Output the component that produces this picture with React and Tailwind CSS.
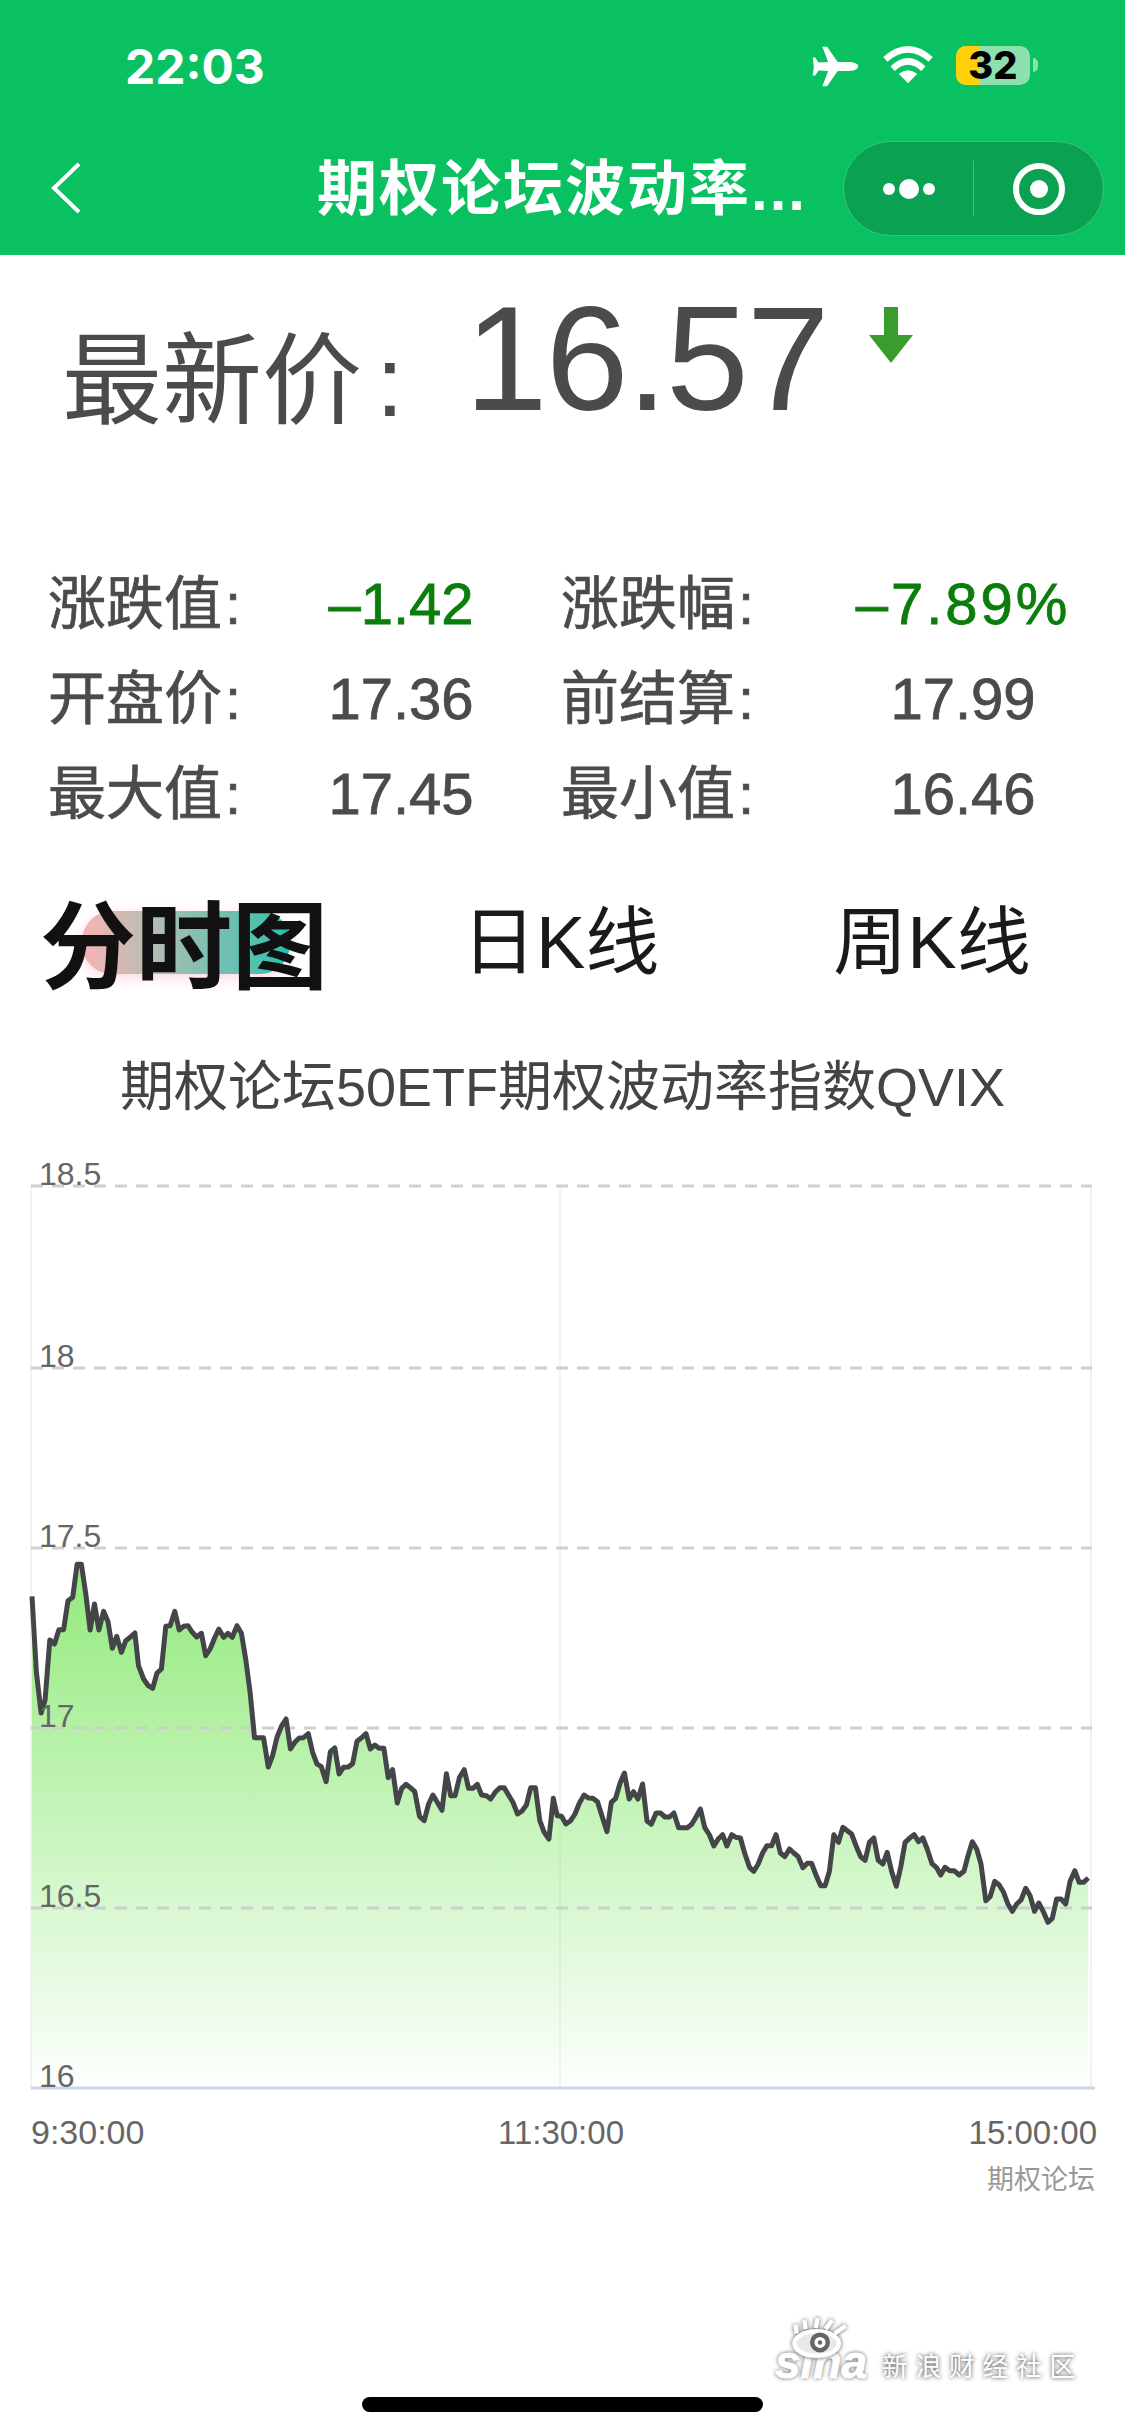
import React from 'react';

const sans = "font-['Liberation_Sans','Noto_Sans_CJK_SC',sans-serif]";

// chart line, read off in two crops: [x, y] in crop pixels
const partA = [88,172,100,400,113,522,124,482,137,303,150,315,162,272,175,272,187,185,200,175,212,76,224,76,236,165,248,273,260,195,272,273,285,217,297,248,309,328,321,292,334,340,346,305,358,295,371,282,381,380,395,420,408,440,420,448,432,402,444,390,456,262,468,260,481,217,493,273,505,262,517,260,529,280,541,294,554,283,566,350,578,330,590,298,602,270,615,295,627,283,639,295,652,260,664,283,676,360,688,460,700,596,712,596,725,596,738,684,750,650,762,595,775,560,787,540,799,630,811,610,823,597,835,596,848,584,860,640,872,675,884,683,897,728,909,638,921,627,933,705,945,685,958,684,970,674,982,607,994,597,1007,584,1019,630,1031,618,1043,628,1056,628,1068,716,1080,692,1093,792,1105,748,1117,736,1129,746,1141,758,1154,832,1167,845,1179,795,1191,768,1203,790,1216,814,1228,704,1240,770,1252,770,1264,715,1277,692,1289,748,1301,748,1313,736,1325,768,1338,770,1350,780,1362,760,1375,746,1387,746,1399,768,1411,790,1424,825,1436,816,1448,798,1460,746,1473,746,1485,845,1497,880,1510,900,1522,778];
const partB = [6,350,18,352,30,375,43,365,55,345,67,312,80,288,92,297,104,298,117,308,129,350,143,398,155,310,167,298,179,252,191,222,204,300,216,278,228,300,241,255,253,366,265,376,278,342,290,342,303,354,315,354,327,342,340,386,352,386,364,386,376,376,388,354,400,330,412,386,425,408,437,441,449,420,461,407,473,441,486,407,498,415,510,417,522,463,535,505,547,517,559,495,571,462,583,440,596,440,608,407,620,462,632,473,645,450,657,462,669,473,682,506,694,493,706,493,718,528,731,560,743,560,755,517,767,407,780,430,792,385,804,395,816,405,828,440,841,473,853,484,865,430,877,417,889,484,902,495,914,460,926,517,939,562,951,505,963,430,975,418,988,407,1000,428,1012,417,1024,450,1037,494,1049,505,1061,528,1073,505,1086,515,1098,515,1112,528,1125,517,1135,475,1148,428,1160,450,1172,495,1185,605,1197,593,1210,547,1222,558,1234,580,1246,615,1258,637,1270,615,1282,603,1295,568,1307,590,1319,637,1331,612,1343,637,1356,670,1368,658,1380,600,1392,600,1405,615,1417,547,1430,515,1442,550,1454,550,1467,537];

const CHART_TOP = 1140;
const points = [];
for (let i = 0; i < partA.length; i += 2) {
  points.push([partA[i] / 2.751, 1540 + partA[i + 1] / 3 - CHART_TOP]);
}
for (let i = 0; i < partB.length; i += 2) {
  points.push([555 + partB[i] / 2.751, 1700 + partB[i + 1] / 3 - CHART_TOP]);
}
const linePath = points.map(([x, y], i) => `${i ? 'L' : 'M'}${x.toFixed(1)} ${y.toFixed(1)}`).join(' ');
const base = 2089 - CHART_TOP;
const areaPath = `${linePath} L${points[points.length - 1][0].toFixed(1)} ${base} L${points[0][0].toFixed(1)} ${base} Z`;
const grid = [
  ['18.5', 1187],
  ['18', 1369],
  ['17.5', 1549],
  ['17', 1729],
  ['16.5', 1909],
];

const StatusBar = () => (
  <div className="h-[128px] flex items-start">
    <span className="ml-[125px] mt-[44px] text-[48px] leading-[46px] font-bold text-white font-['Inter',sans-serif]">22:03</span>
    <svg className="ml-[547px] mt-[46px]" width="47" height="41" viewBox="103 52 137 120">
      <path fill="#fff" d="M238 112C238 104 225 99 210 99L178 99L147 54L133 54L150 99L122 100L112 86L105 86L108 112L105 138L112 138L122 124L150 125L133 170L147 170L178 125L210 125C225 125 238 120 238 112Z" />
    </svg>
    <svg className="ml-[23px] mt-[46px]" width="52" height="38" viewBox="312 50 156 114">
      <path fill="#fff" d="M390 162L362 133Q390 112 418 133Z" />
      <path fill="none" stroke="#fff" strokeWidth="19" d="M344 118Q390 74 436 118" />
      <path fill="none" stroke="#fff" strokeWidth="19" d="M322 90Q390 30 458 90" />
    </svg>
    <div className="relative ml-[22px] mt-[46px] w-[74px] h-[39px] rounded-[10px] bg-[#8de0b0] flex items-center justify-center">
      <div className="absolute left-0 top-0 bottom-0 w-[24px] rounded-l-[10px] bg-[#ffd00a]" />
      <span className="relative text-[38px] leading-[39px] font-extrabold text-black font-['Inter',sans-serif]">32</span>
    </div>
    <div className="ml-[3px] mt-[58px] w-[5px] h-[14px] rounded-r-full bg-[#8de0b0]" />
  </div>
);

const NavBar = () => (
  <div className="h-[127px] flex items-start">
    <svg className="ml-[50px] mt-[34px]" width="32" height="52" viewBox="0 0 32 52">
      <path d="M29 2L4 26L29 50" fill="none" stroke="#fff" strokeWidth="4" />
    </svg>
    <span className={`ml-[235px] mt-[29px] text-[60px] leading-[66px] font-semibold text-white tracking-[2px] whitespace-nowrap ${sans}`}>期权论坛波动率...</span>
    <div className="ml-auto mr-[21px] mt-[13px] w-[261px] h-[95px] rounded-full bg-[#0aa252] border border-[#3cc47f] flex items-center">
      <div className="w-[130px] h-[55px] border-r border-[#3cc47f] flex items-center justify-center gap-[4px]">
        <span className="w-[12px] h-[12px] rounded-full bg-white" />
        <span className="w-[20px] h-[20px] rounded-full bg-white" />
        <span className="w-[12px] h-[12px] rounded-full bg-white" />
      </div>
      <div className="flex-1 flex items-center justify-center">
        <span className="w-[52px] h-[52px] rounded-full border-[6px] border-white flex items-center justify-center">
          <span className="w-[18px] h-[18px] rounded-full bg-white" />
        </span>
      </div>
    </div>
  </div>
);

const Stat = ({ label, value, green, width, valueWidth }) => (
  <div className={`flex items-center ${width}`}>
    <span className="w-[280px] shrink-0 text-[#4b4b4b] [-webkit-text-stroke:0.7px_currentColor]">{label}<span className="ml-[3px]">:</span></span>
    <span className={`text-center whitespace-nowrap [-webkit-text-stroke:0.8px_currentColor] ${valueWidth} ${green ? 'text-[#0a7d0a]' : 'text-[#4b4b4b]'}`}>{value}</span>
  </div>
);

const Chart = () => (
  <svg className="block mt-[20px]" width="1125" height="1100" viewBox="0 0 1125 1100">
    <defs>
      <linearGradient id="area" x1="0" y1="0" x2="0" y2="1">
        <stop offset="0" stopColor="#92ea7c" />
        <stop offset="1" stopColor="#92ea7c" stopOpacity="0.01" />
      </linearGradient>
    </defs>
    {[31, 560, 1091].map((x) => (
      <line key={x} x1={x} x2={x} y1={1187 - CHART_TOP} y2={base} stroke="#f2f2f2" strokeWidth="2" />
    ))}
    <path d={areaPath} fill="url(#area)" />
    {grid.map(([label, y]) => (
      <line key={label} x1="31" x2="1092" y1={y - CHART_TOP} y2={y - CHART_TOP} stroke="#cccccc" strokeOpacity="0.95" strokeWidth="3" strokeDasharray="12 9" />
    ))}
    <path d={linePath} fill="none" stroke="#434548" strokeWidth="5" strokeLinejoin="round" />
    <line x1="31" x2="1095" y1={base} y2={base} stroke="#ccd6eb" strokeWidth="3" />
    <g fontFamily="Liberation Sans" fontSize="32" fill="#666666">
      {grid.map(([label, y]) => (
        <text key={label} x="39" y={y - CHART_TOP - 1}>{label}</text>
      ))}
      <text x="39" y={base - 1}>16</text>
    </g>
    <g fontFamily="Liberation Sans" fontSize="33" fill="#666666">
      <text x="31" y={2145 - CHART_TOP} fontSize="34">9:30:00</text>
      <text x="561" y={2145 - CHART_TOP} textAnchor="middle">11:30:00</text>
      <text x="1097" y={2145 - CHART_TOP} textAnchor="end">15:00:00</text>
    </g>
    <text x="1095" y={2190 - CHART_TOP} textAnchor="end" fontFamily="Noto Sans CJK SC" fontSize="27" fill="#999999">期权论坛</text>
  </svg>
);

const SinaMark = () => (
  <div className="absolute left-[775px] top-[2318px] w-[310px] h-[72px]">
    <span className="absolute left-0 top-[18px] text-[46px] leading-[52px] italic font-bold text-white font-['Liberation_Sans',sans-serif] [-webkit-text-stroke:1px_#fff] [text-shadow:0_0_4px_#333]">sina</span>
    <svg className="absolute left-[15px] top-0 drop-shadow-[0_0_2px_#555]" width="60" height="40" viewBox="0 0 54 36">
      <ellipse cx="24" cy="23" rx="20" ry="11" fill="#e8e8e8" stroke="#fff" strokeWidth="4" />
      <circle cx="27" cy="22" r="7" fill="#fff" stroke="#666" strokeWidth="4" />
      <circle cx="27" cy="22" r="2" fill="#666" />
      <path d="M6 14L5 6M14 10L13 2M23 9L25 0M32 10L38 2M40 14L50 7" stroke="#fff" strokeWidth="4" />
    </svg>
    <span className="absolute left-[107px] top-[29px] text-[26px] leading-[36px] tracking-[7.5px] whitespace-nowrap text-white font-['Noto_Sans_CJK_SC',sans-serif] [text-shadow:0_0_4px_#333]">新浪财经社区</span>
  </div>
);

const App = () => (
  <div className={`relative w-[1125px] h-[2436px] bg-white overflow-hidden ${sans}`}>
    <div className="bg-[#0ac161] h-[255px]">
      <StatusBar />
      <NavBar />
    </div>

    <div className="h-[301px] pl-[62px] flex items-start text-[#4b4b4b]">
      <span className="mt-[68px] text-[100px] leading-[116px]">最新价<span className="ml-[14px]">:</span></span>
      <span className="ml-[61px] mt-[19px] text-[149px] leading-[170px] tracking-[-2px]">16.57</span>
      <svg className="ml-[38px] mt-[50px] blur-[0.7px]" width="50" height="60" viewBox="0 0 48 60">
        <path d="M17 2H31V30H46L24 58L2 30H17Z" fill="#3a9c2c" />
      </svg>
    </div>

    <div className="pl-[48px] text-[58px] leading-[95px] flex flex-col">
      <div className="flex">
        <Stat width="w-[513px]" valueWidth="w-[146px]" label="涨跌值" value="–1.42" green />
        <Stat width="flex-1" valueWidth="w-[244px] tracking-[3px]" label="涨跌幅" value="–7.89%" green />
      </div>
      <div className="flex">
        <Stat width="w-[513px]" valueWidth="w-[146px]" label="开盘价" value="17.36" />
        <Stat width="flex-1" valueWidth="w-[244px]" label="前结算" value="17.99" />
      </div>
      <div className="flex">
        <Stat width="w-[513px]" valueWidth="w-[146px]" label="最大值" value="17.45" />
        <Stat width="flex-1" valueWidth="w-[244px]" label="最小值" value="16.46" />
      </div>
    </div>

    <div className="relative mt-[52px] h-[110px] pl-[40px] flex items-center text-[#1a1a1a]">
      <div className="absolute left-[82px] top-[18px] w-[208px] h-[63px] rounded-[30px] bg-gradient-to-r from-[#f7b4b4] via-[#8fbfb2] to-[#12c0b0] shadow-[0_4px_14px_#ffd6e2]" />
      <span className="relative text-[96px] leading-[110px] font-semibold text-[#111]">分时图</span>
      <span className="ml-[134px] mb-[10px] text-[74px] leading-[100px]">日K线</span>
      <span className="ml-[174px] mb-[10px] text-[74px] leading-[100px]">周K线</span>
    </div>

    <div className="mt-[52px] text-center text-[54px] leading-[64px] text-[#444] whitespace-nowrap">期权论坛50ETF期权波动率指数QVIX</div>

    <Chart />

    <SinaMark />
    <div className="absolute left-[362px] top-[2397px] w-[401px] h-[15px] rounded-full bg-black" />
  </div>
);

export default App;
